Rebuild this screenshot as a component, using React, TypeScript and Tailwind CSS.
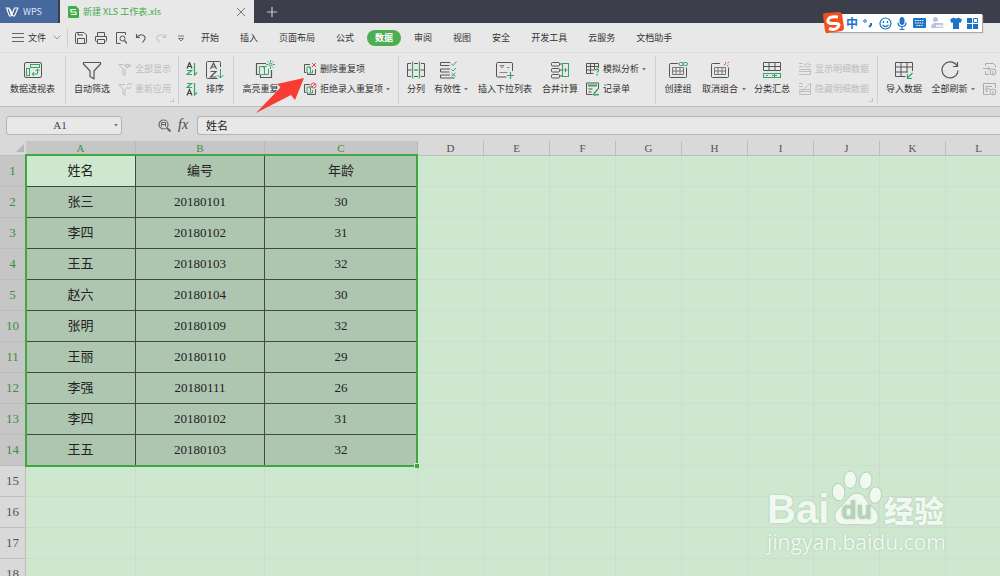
import { useState, type ReactNode } from 'react';

const GREEN = '#35a566';
const DARK = '#555555';
const RED = '#e5484d';
const FAINT = '#bdbdbd';

const menus = ['开始', '插入', '页面布局', '公式', '数据', '审阅', '视图', '安全', '开发工具', '云服务', '文档助手'];

const columns = [
  { name: 'A', className: 'w-[110px]' },
  { name: 'B', className: 'w-[129px]' },
  { name: 'C', className: 'w-[153px]' },
  { name: 'D', className: 'w-[66px]' },
  { name: 'E', className: 'w-[66px]' },
  { name: 'F', className: 'w-[66px]' },
  { name: 'G', className: 'w-[66px]' },
  { name: 'H', className: 'w-[66px]' },
  { name: 'I', className: 'w-[66px]' },
  { name: 'J', className: 'w-[66px]' },
  { name: 'K', className: 'w-[66px]' },
  { name: 'L', className: 'w-[66px]' },
];

const rows: { n: number; cells?: string[] }[] = [
  { n: 1, cells: ['姓名', '编号', '年龄'] },
  { n: 2, cells: ['张三', '20180101', '30'] },
  { n: 3, cells: ['李四', '20180102', '31'] },
  { n: 4, cells: ['王五', '20180103', '32'] },
  { n: 5, cells: ['赵六', '20180104', '30'] },
  { n: 10, cells: ['张明', '20180109', '32'] },
  { n: 11, cells: ['王丽', '20180110', '29'] },
  { n: 12, cells: ['李强', '20180111', '26'] },
  { n: 13, cells: ['李四', '20180102', '31'] },
  { n: 14, cells: ['王五', '20180103', '32'] },
  { n: 15 },
  { n: 16 },
  { n: 17 },
  { n: 18 },
];

function Svg({ box = 20, className = 'size-5', color = DARK, children }: { box?: number; className?: string; color?: string; children: ReactNode }) {
  return (
    <svg viewBox={`0 0 ${box} ${box}`} className={`shrink-0 ${className}`} fill="none" stroke={color} strokeWidth="1" aria-hidden="true">
      {children}
    </svg>
  );
}

function Caret({ className = '' }: { className?: string }) {
  return (
    <svg viewBox="0 0 4 3" className={`h-[3px] w-1 shrink-0 ${className}`} aria-hidden="true">
      <path d="M0 0h4L2 2.5z" fill="#777" />
    </svg>
  );
}

/* ---------- large ribbon icons ---------- */

const PivotIcon = () => (
  <Svg>
    <rect x="1.5" y="2.5" width="17" height="15" rx="1.5" />
    <g stroke={GREEN}>
      <rect x="7.5" y="4.5" width="9" height="3" />
      <rect x="3.5" y="8.5" width="3" height="7" />
      <path d="M14.500 9.500v4.500h-5M12.500 11l2-2 2 2M11 12l-2 2 2 2" />
    </g>
  </Svg>
);

const FunnelIcon = () => (
  <Svg>
    <path d="M1.500 2.500h17v1.500l-6.500 7v8l-4-2.500v-5.500l-6.500-7z" strokeWidth="1.2" strokeLinejoin="round" />
  </Svg>
);

const SortIcon = () => (
  <Svg>
    <path d="M15.500 7v-4.500q0-1-1-1h-12q-1 0-1 1v15q0 1 1 1h10" />
    <path d="M5.500 9l3-6 3 6M6.500 7h4M5.500 11.500h5.500l-5.500 5.500h6" strokeWidth="1.2" />
    <path d="M15.500 9v9M12.500 15l3 3 3-3" stroke={GREEN} />
  </Svg>
);

const HighlightIcon = () => (
  <Svg>
    <path d="M11 3.500h-9.500v11h3M16.500 10v7.500h-11v-3" strokeWidth="1.2" />
    <path d="M4.500 14.500v-8h7M13.500 9v5.500h-7M8 8l1.500-1v7" stroke={GREEN} />
    <circle cx="15.500" cy="4.500" r="1.500" stroke={GREEN} />
    <path d="M15.500 0v2M15.500 7v2M11 4.500h2M18 4.500h2M12.500 1.500l1 1M17.500 6.500l1 1M18.500 1.500l-1 1" stroke={GREEN} />
  </Svg>
);

const SplitIcon = () => (
  <Svg>
    <path d="M5 3.500h-3.500v13h3.500M15 3.500h3.500v13h-3.500M1.500 10h4M14.500 10h4M8 3.500h4M8 10h4M8 16.500h4" />
    <path d="M6.500 1.500v17M13.500 1.500v17" stroke={GREEN} strokeWidth="1.2" />
  </Svg>
);

const ValidIcon = () => (
  <Svg>
    <path d="M12 2.500h-9.500v3h9M12 9h-9.500v3h9M12 15h-9.500v3h14" />
    <path d="M13 3.500l2 2 3.500-4M13.500 9.500l1.500 1.500 3-3M13.500 13l4 3.500M17.500 13l-4 3.500" stroke={GREEN} />
  </Svg>
);

const DropListIcon = () => (
  <Svg>
    <path d="M17.500 11v-7q0-1.500-1-1.500h-14q-1 0-1 1v12.500q0 1 1 1h9" />
    <path d="M5 5.500h4l-2 2.500zM4.500 12.500h8M12 7.500h2.500" stroke="#888" />
    <path d="M15.500 12v7M12 15.500h7" stroke={GREEN} strokeWidth="1.200" />
  </Svg>
);

const MergeIcon = () => (
  <Svg>
    <rect x="1.500" y="2.500" width="8" height="3.500" rx="1" />
    <rect x="1.500" y="8.500" width="8" height="3.500" rx="1" />
    <rect x="1.500" y="14.500" width="8" height="3.500" rx="1" />
    <path d="M9.500 4h2.500M9.500 10h2.500M9.500 16h2.500" />
    <rect x="12.500" y="3.500" width="6" height="13" stroke={GREEN} />
    <path d="M15.500 8v4M13.500 10h4" stroke={GREEN} />
  </Svg>
);

const GroupGrid = () => (
  <>
    <path d="M10 3.500h-7.500q-1 0-1 1v12q0 1 1 1h15q1 0 1-1v-9" />
    <path d="M4.500 7.500h11v7h-11zM4.500 11h11M8 7.500v7M12 7.500v7" stroke="#777" />
  </>
);

const CreateGroupIcon = () => (
  <Svg>
    <GroupGrid />
    <rect x="11" y="2.500" width="4.500" height="3" rx="1.500" stroke={GREEN} />
    <rect x="15" y="2.500" width="4.500" height="3" rx="1.500" stroke={GREEN} />
  </Svg>
);

const UngroupIcon = () => (
  <Svg>
    <GroupGrid />
    <path d="M14 5l2-1.500M17 6l1.500-1M15 2l1 1M19 2l-1.500 1" stroke={RED} />
  </Svg>
);

const SubtotalIcon = () => (
  <Svg>
    <path d="M1.500 2.500h17v8h-17zM1.500 6.500h17M7 2.500v8M13 2.500v8" />
    <rect x="1.500" y="13.500" width="17" height="4" stroke={GREEN} />
    <path d="M4 15.500h2M10 15.500h5M12.500 13.500v4" stroke={GREEN} />
  </Svg>
);

const ImportIcon = () => (
  <Svg>
    <path d="M18.500 11v-8.500h-17v14h10M1.500 7h17M1.500 12h12M7 2.500v14M13 2.500v10" />
    <path d="M18.500 13l-5 5M13.500 14v4.500h4.500" stroke={GREEN} strokeWidth="1.200" />
  </Svg>
);

const RefreshIcon = () => (
  <Svg>
    <path d="M17 6a8 8 0 1 0 1 4.500M17.500 2v4.500h-4.500" strokeWidth="1.200" />
  </Svg>
);

/* ---------- small ribbon icons ---------- */

const ShowAllIcon = () => (
  <Svg box={14} className="size-3.5" color={FAINT}>
    <path d="M5 2.500h-4l4 4.500v5l2 1.500v-6l1-1M6 3.500q3-3 7 0q-4 3.500-7 0z" />
    <circle cx="9.500" cy="3.500" r="1" />
  </Svg>
);

const ReapplyIcon = () => (
  <Svg box={14} className="size-3.5" color={FAINT}>
    <path d="M7 2.500h-6l4 4.500v5l2 1.500v-6l1-1M9 3a2.500 2.500 0 0 1 4-.5v-1.500M13 5a2.500 2.500 0 0 1-4 .5v1.500" />
  </Svg>
);

const RepeatIcon = ({ children }: { children: ReactNode }) => (
  <Svg box={14} className="size-3.5">
    <path d="M7 2.500h-5.500v8h2M12.500 7v5.500h-8v-2" />
    <path d="M4 10v-5h4M9.500 8v3h-4M6 6l1.500-.5v5" stroke={GREEN} />
    <g stroke={RED}>{children}</g>
  </Svg>
);

const WhatIfIcon = () => (
  <Svg box={14} className="size-3.5">
    <path d="M12.500 6v-4.500h-12v10h7M.5 4.500h12M.5 8h8M4.500 1.500v10M8.500 1.500v6" />
    <path d="M9.500 8.500q0-1.500 1.500-1.500t1.500 1.500q0 1-1.500 2M11 12v1.500" stroke={GREEN} strokeWidth="1.300" />
  </Svg>
);

const RecordIcon = () => (
  <Svg box={14} className="size-3.5">
    <path d="M12.500 7v-6h-12v11.500h6M2.500 7h4M2.500 10h3" />
    <path d="M2 3.500h9" stroke={GREEN} strokeWidth="2" />
    <path d="M12 7l-4 4.500v1.500l5-.5" stroke={GREEN} strokeWidth="1.500" />
  </Svg>
);

const DetailIcon = ({ slash = false }: { slash?: boolean }) => (
  <Svg box={14} className="size-3.5" color={FAINT}>
    <path d="M1 1.500h4M1 4.500h4M1 7.500h11.500M1 9.500h11.500M1 12.500h11.500v-5" />
    {slash ? <path d="M12.500 1v6M1 11.500l11-10" /> : <path d="M6 3.500q3.500-3.500 7 0q-3.500 3.500-7 0z" />}
  </Svg>
);

const SheetInfoIcon = ({ arrow = false }: { arrow?: boolean }) => (
  <Svg box={14} className="size-3.5" color="#aaaaaa">
    {arrow ? (
      <path d="M2.500 4v-2.500h8l2 2v2M2.500 9v3.500h4M0 6.500h7M5 4.500l2 2-2 2" />
    ) : (
      <path d="M12.500 6v-4.500h-12v11h6M3 4.500h6M3 4.500v5h2M3 7h4" />
    )}
    <circle cx="10" cy="10" r="3" />
    <path d="M10 9v3" />
  </Svg>
);

function SortSmall({ desc = false }: { desc?: boolean }) {
  return (
    <svg viewBox="0 0 12 14" className="h-3.5 w-3" fill="none" strokeWidth="1.200" aria-hidden="true">
      <path d={desc ? 'M1 13.500l2.500-6L6 13.500M2 11.500h3' : 'M1 6.500l2.500-6L6 6.500M2 4.500h3'} stroke="#444" />
      <path d={desc ? 'M1 1.500h4.500L1 5.500h5' : 'M1 8.500h4.500L1 12.500h5'} stroke={GREEN} />
      <path d="M8.500 1v12l2.500-2.500" stroke={GREEN} />
    </svg>
  );
}

function Big({ icon, label, width, caret }: { icon: ReactNode; label: string; width: string; caret?: boolean }) {
  return (
    <button className={`relative flex shrink-0 flex-col items-center gap-[3px] whitespace-nowrap ${width}`}>
      {icon}
      <span className="leading-3">{label}</span>
      {caret && <Caret className="absolute right-0 bottom-1" />}
    </button>
  );
}

function Small({ icon, label, caret, disabled }: { icon: ReactNode; label: string; caret?: boolean; disabled?: boolean }) {
  return (
    <button disabled={disabled} className="flex h-3.5 items-center gap-[3px] whitespace-nowrap leading-3 disabled:text-[#bdbdbd]">
      {icon}
      {label}
      {caret && <Caret />}
    </button>
  );
}

function Group({ className, corner, children }: { className: string; corner?: boolean; children: ReactNode }) {
  return (
    <div className={`relative flex h-12 shrink-0 items-start border-r border-[#d0d0d0] pt-1 ${className}`}>
      {children}
      {corner && <span className="absolute right-1 bottom-0.5 size-1 border-r border-b border-[#c4c4c4]" />}
    </div>
  );
}

function TitleBar() {
  return (
    <header className="flex h-[23px] bg-[#3c3e4c]">
      <button className="mr-0.5 flex w-[58px] items-center gap-1 bg-[#46689c] pl-[5px] text-[9px] text-[#dfe6f1]">
        <svg viewBox="0 0 14 10" className="h-2.5 w-3.5" fill="none" stroke="#fff" strokeWidth="1.1" aria-hidden="true">
          <path d="M.5 1h3.500l2.500 7.500L9.500 1h3.500l-3.500 8H8L5 2M3 1.500L2 3l2.500 6h1.500" strokeLinejoin="round" />
        </svg>
        WPS
      </button>
      <div className="flex w-[194px] items-center bg-[#e8e8e8] px-2 text-[#3fae49]">
        <svg viewBox="0 0 11 12" className="h-3 w-[11px]" aria-hidden="true">
          <path d="M0 1q0-1 1-1h7l3 3v8q0 1-1 1h-9q-1 0-1-1z" fill="#3fae49" />
          <path d="M8 3.500H3v2.500h5v2.500H3" fill="none" stroke="#fff" strokeWidth="1.200" />
        </svg>
        <span className="ml-1 flex-1 text-[9px]">新建 XLS 工作表.xls</span>
        <button aria-label="关闭">
          <svg viewBox="0 0 10 10" className="size-2.5" stroke="#777" aria-hidden="true">
            <path d="M1 1l8 8M9 1l-8 8" />
          </svg>
        </button>
      </div>
      <button className="ml-[13px]" aria-label="新建">
        <svg viewBox="0 0 10 10" className="size-2.5" stroke="#c8c8cf" strokeWidth="1.200" aria-hidden="true">
          <path d="M5 0v10M0 5h10" />
        </svg>
      </button>
    </header>
  );
}

function MenuBar({ active, onSelect }: { active: string; onSelect: (m: string) => void }) {
  return (
    <nav className="flex h-[30px] items-center border-b border-[#dcdcdc] text-[#333]">
      <button className="flex w-[68px] shrink-0 items-center border-r border-[#cfcfcf] pl-3 leading-[18px]">
        <svg viewBox="0 0 12 9" className="mr-1 h-[9px] w-3" stroke="#666" aria-hidden="true">
          <path d="M0 .5h12M0 4.500h12M0 8.500h12" />
        </svg>
        文件
        <svg viewBox="0 0 8 5" className="ml-[7px] h-[5px] w-2" fill="none" stroke="#999" aria-hidden="true">
          <path d="M.5.5L4 4 7.500.5" />
        </svg>
      </button>
      <div className="flex w-[133px] shrink-0 items-center gap-2 pl-[7px]">
        <button aria-label="保存">
          <Svg box={12} className="size-3">
            <path d="M.5 1.500q0-1 1-1h7.500l2.500 2.500v7.500q0 1-1 1h-9q-1 0-1-1zM2.500 11.500v-5h7v5M3 .5v2.500h5" />
          </Svg>
        </button>
        <button aria-label="打印">
          <Svg box={12} className="size-3">
            <path d="M2.500 4v-3.500h7v3.500M2.500 9.500h-1q-1 0-1-1v-4h11v4q0 1-1 1h-1M2.500 7.500h7v4h-7z" />
          </Svg>
        </button>
        <button aria-label="打印预览">
          <Svg box={12} className="size-3">
            <path d="M10.500 3v-2.500h-9v11h4" />
            <circle cx="7.500" cy="6.500" r="2.500" />
            <path d="M9.500 8.500l2.500 3" strokeWidth="1.300" />
          </Svg>
        </button>
        <button aria-label="撤销">
          <Svg box={12} className="size-3">
            <path d="M1.500 2v3.500h3.500M1.500 5.500q3-3.500 6-2.500t2.500 4l-2.500 3.500" strokeWidth="1.100" />
          </Svg>
        </button>
        <button aria-label="恢复">
          <Svg box={12} className="size-3" color="#c4c4c4">
            <path d="M10.500 2v3.500h-3.500M10.500 5.500q-3-3.500-6-2.500t-2.500 4l2.500 3.500" strokeWidth="1.100" />
          </Svg>
        </button>
        <button aria-label="更多">
          <Svg box={12} className="size-3" color="#777">
            <path d="M3 4h6M3.500 6.500h5L6 9z" />
          </Svg>
        </button>
      </div>
      <div className="flex items-center gap-[21px]">
        {menus.map((m) => (
          <button
            key={m}
            onClick={() => onSelect(m)}
            className={
              m === active
                ? '-mx-2 h-4 shrink-0 rounded-full bg-[#4cae50] px-2 font-bold whitespace-nowrap text-white'
                : 'shrink-0 whitespace-nowrap'
            }
          >
            {m}
          </button>
        ))}
      </div>
    </nav>
  );
}

function Ribbon() {
  return (
    <section className="relative z-10 flex h-[53px] pt-[3px] text-[#333]">
      <div className="flex w-full overflow-hidden">
        <Group className="w-[66px] justify-center">
          <Big icon={<PivotIcon />} label="数据透视表" width="w-[50px]" />
        </Group>
        <Group className="w-[113px] gap-1.5 pl-1.5" corner>
          <Big icon={<FunnelIcon />} label="自动筛选" width="w-10" />
          <div className="flex flex-col gap-1.5 pt-0.5">
            <Small icon={<ShowAllIcon />} label="全部显示" disabled />
            <Small icon={<ReapplyIcon />} label="重新应用" disabled />
          </div>
        </Group>
        <Group className="w-[55px] gap-[7px] pl-[7px]">
          <div className="flex flex-col gap-1.5 pt-0.5">
            <button aria-label="升序"><SortSmall /></button>
            <button aria-label="降序"><SortSmall desc /></button>
          </div>
          <Big icon={<SortIcon />} label="排序" width="w-5" />
        </Group>
        <Group className="w-[165px] gap-[14px] pl-[7px]">
          <Big icon={<HighlightIcon />} label="高亮重复项" width="w-12" />
          <div className="flex flex-col gap-1.5 pt-0.5">
            <Small icon={<RepeatIcon><path d="M9 1l4 4M13 1l-4 4" /></RepeatIcon>} label="删除重复项" />
            <Small icon={<RepeatIcon><circle cx="10.500" cy="3.500" r="2.500" /><path d="M9 5l3-3" /></RepeatIcon>} label="拒绝录入重复项" caret />
          </div>
        </Group>
        <Group className="w-[257px] pl-1.5">
          <Big icon={<SplitIcon />} label="分列" width="w-[22px]" />
          <Big icon={<ValidIcon />} label="有效性" width="w-[41px]" caret />
          <Big icon={<DropListIcon />} label="插入下拉列表" width="w-[74px]" />
          <Big icon={<MergeIcon />} label="合并计算" width="w-9" />
          <div className="flex flex-col gap-1.5 pt-0.5 pl-2">
            <Small icon={<WhatIfIcon />} label="模拟分析" caret />
            <Small icon={<RecordIcon />} label="记录单" />
          </div>
        </Group>
        <Group className="w-[222px] pl-1.5" corner>
          <Big icon={<CreateGroupIcon />} label="创建组" width="w-8" />
          <Big icon={<UngroupIcon />} label="取消组合" width="w-[52px]" caret />
          <Big icon={<SubtotalIcon />} label="分类汇总" width="w-[52px]" />
          <div className="flex flex-col gap-1.5 pt-0.5">
            <Small icon={<DetailIcon />} label="显示明细数据" disabled />
            <Small icon={<DetailIcon slash />} label="隐藏明细数据" disabled />
          </div>
        </Group>
        <div className="flex h-12 shrink-0 items-start pt-1 pl-1.5">
          <Big icon={<ImportIcon />} label="导入数据" width="w-10" />
          <Big icon={<RefreshIcon />} label="全部刷新" width="w-[51px]" caret />
          <div className="flex flex-col gap-1.5 pt-0.5 pl-2">
            <button aria-label="连接"><SheetInfoIcon arrow /></button>
            <button aria-label="属性"><SheetInfoIcon /></button>
          </div>
        </div>
      </div>
      <svg viewBox="0 0 50 36" className="pointer-events-none absolute top-[25px] left-[255px] h-9 w-[50px]" aria-hidden="true">
        <path d="M1 35L26 9l-4-3L49 0 40 22l-4-5z" fill="#fa3b34" />
      </svg>
    </section>
  );
}

function FormulaBar() {
  const [formula, setFormula] = useState('姓名');
  return (
    <div className="flex h-[35px] items-center border-t border-[#bfbfbf] bg-[#d9d9d9] pt-0.5 pl-1.5">
      <div className="relative h-[19px] w-[116px] shrink-0">
        <input
          aria-label="名称框"
          defaultValue="A1"
          className="h-full w-full rounded-[3px] border border-[#b4b4b4] bg-[#e8e8e8] pr-2 text-center font-['Liberation_Serif',serif] text-[11px] text-[#444]"
        />
        <Caret className="absolute top-2 right-1" />
      </div>
      <svg viewBox="0 0 13 13" className="ml-9 size-[13px] shrink-0" fill="none" stroke="#666" strokeWidth="1.200" aria-hidden="true">
        <circle cx="5.500" cy="5.500" r="4.500" />
        <path d="M9 9l3.500 3.500" strokeWidth="2" />
        <path d="M3.500 7.500v-4h4v4M3.500 5.500h4" strokeWidth="1" />
      </svg>
      <span className="w-[26px] shrink-0 pl-[7px] font-['Liberation_Serif',serif] text-[14px] leading-4 text-[#444] italic">fx</span>
      <input
        aria-label="编辑栏"
        value={formula}
        onChange={(e) => setFormula(e.target.value)}
        className="h-[19px] min-w-0 flex-1 rounded-l-[3px] border border-r-0 border-[#b4b4b4] bg-[#e8e8e8] pl-2 text-[11px] text-[#222]"
      />
    </div>
  );
}

function cellClass(selected: boolean, r: number, c: number) {
  if (!selected) return 'border-r border-b border-[#d2d8d2] p-0';
  if (r === 0 && c === 0) return 'border-r border-b border-[#3e4a40] bg-[#cde8cf] p-0';
  return 'border-r border-b border-[#3e4a40] bg-[#aec6b0] p-0';
}

function Sheet() {
  return (
    <main className="relative min-h-0 flex-1 overflow-hidden bg-[#cde8cf]">
      <table className="w-[1012px] table-fixed border-separate border-spacing-0 text-center font-['Liberation_Serif','Noto_Sans_CJK_SC',serif] text-[13px] leading-4 text-[#222]">
        <thead>
          <tr className="h-[15px] text-[11px] leading-3 text-[#555]">
            <th className="w-[26px] border-b border-[#bcbcbc] bg-[#d9d9d9] p-0">
              <svg viewBox="0 0 8 8" className="ml-4 size-2" aria-hidden="true">
                <path d="M8 0v8H0z" fill="#b5b5b5" />
              </svg>
            </th>
            {columns.map((col, i) => (
              <th
                key={col.name}
                scope="col"
                className={`border-r border-b border-[#bcbcbc] p-0 font-normal ${i < 3 ? 'bg-[#c6c6c6] text-[#3b8f40]' : 'bg-[#d9d9d9]'} ${col.className}`}
              >
                {col.name}
              </th>
            ))}
          </tr>
        </thead>
        <tbody>
          {rows.map((row, r) => (
            <tr key={row.n} className="h-[31px]">
              <th
                scope="row"
                className={`border-r border-b border-[#bcbcbc] p-0 font-normal ${row.cells ? 'bg-[#c6c6c6] text-[#3b8f40]' : 'bg-[#d9d9d9] text-[#555]'}`}
              >
                {row.n}
              </th>
              {columns.map((col, c) => (
                <td key={col.name} className={cellClass(!!row.cells && c < 3, r, c)}>
                  {row.cells?.[c]}
                </td>
              ))}
            </tr>
          ))}
        </tbody>
      </table>
      <div className="pointer-events-none absolute top-[13px] left-[25px] h-[313px] w-[393px] border-2 border-[#3fa642]">
        <span className="absolute -right-[3px] -bottom-[3px] size-[5px] border-t border-l border-[#cde8cf] bg-[#3fa642]" />
      </div>
      <Watermark />
    </main>
  );
}

function Watermark() {
  return (
    <div className="pointer-events-none absolute right-14 bottom-[22px] w-[177px] text-[#f1f8f1] [text-shadow:0_0_2px_#9fbfa2]">
      <div className="flex h-[60px] items-end justify-between font-bold">
        <span className="font-['Liberation_Sans',sans-serif] text-[40px] leading-[42px]">Bai</span>
        <span className="relative mb-1">
          <svg viewBox="0 0 52 60" className="h-[58px] w-[52px]" fill="#f1f8f1" stroke="#b3d0b5" strokeWidth="1" aria-hidden="true">
            <ellipse cx="7" cy="25" rx="6.500" ry="9" transform="rotate(-8 7 25)" />
            <ellipse cx="19" cy="12" rx="6.500" ry="9" />
            <ellipse cx="35" cy="13" rx="6.500" ry="9" transform="rotate(10 35 13)" />
            <ellipse cx="45" cy="28" rx="6.500" ry="8.500" transform="rotate(8 45 28)" />
            <path d="M26 26c7 0 9 7 13 12 4 4 9 7 9 13 0 7-6 8-11 8-7 0-15-1-22 0-7 0-12-3-12-9 0-7 6-9 10-14 4-4 6-10 13-10z" />
          </svg>
          <span className="absolute inset-x-0 bottom-0.5 text-center font-['Liberation_Sans',sans-serif] text-[25px] leading-7 text-[#b5d3b8]">du</span>
        </span>
        <span className="text-[30px] leading-[42px] font-black">经验</span>
      </div>
      <p className="font-['Open_Sans',sans-serif] text-[21px] leading-6">jingyan.baidu.com</p>
    </div>
  );
}

function ImeBar() {
  return (
    <div className="absolute top-3.5 right-[18px] z-20 flex h-[18px] w-[152px] items-center justify-between bg-white pr-1 pl-3 text-[#1c74c6] shadow-[1px_1px_1px_#aaa]">
      <svg viewBox="0 0 22 22" className="absolute -top-0.5 -left-2 size-[22px]" aria-hidden="true">
        <path d="M1 3q0-2 2-2l14-1q2 0 3 2l2 14q0 2-2 3L6 21q-2 1-3-2z" fill="#f0501e" />
        <path d="M16 5Q7 4 6 8t6 3.500 4 3.500-9 1.500" fill="none" stroke="#fff" strokeWidth="3" />
      </svg>
      <span className="ml-1 text-xs leading-4 font-bold">中</span>
      <svg viewBox="0 0 10 10" className="size-2.5" fill="none" stroke="currentColor" aria-hidden="true">
        <circle cx="2" cy="3" r="1.300" />
        <path d="M8 5v2l-2 2" strokeWidth="2" />
      </svg>
      <svg viewBox="0 0 13 13" className="size-[13px]" fill="none" stroke="currentColor" strokeWidth="1.200" aria-hidden="true">
        <circle cx="6.500" cy="6.500" r="5.500" />
        <path d="M4.500 4v2M8.500 4v2M3.500 8q3 3 6 0" />
      </svg>
      <svg viewBox="0 0 10 13" className="h-[13px] w-2.5" fill="none" stroke="currentColor" aria-hidden="true">
        <rect x="3" y=".5" width="4" height="7" rx="2" fill="currentColor" />
        <path d="M1 5.500q0 4 4 4t4-4M5 9.500v3M2.500 12.500h5" strokeWidth="1.200" />
      </svg>
      <svg viewBox="0 0 13 10" className="h-2.5 w-[13px]" aria-hidden="true">
        <rect width="13" height="10" rx="1" fill="currentColor" />
        <path d="M2 2.500h9M2 5h9M3.500 7.500h6" stroke="#fff" strokeDasharray="1.500 .8" />
      </svg>
      <svg viewBox="0 0 13 12" className="h-3 w-[13px]" fill="#b9c4d6" aria-hidden="true">
        <circle cx="4.500" cy="2.500" r="2.500" />
        <path d="M0 11q0-5 4.500-5h7.500v5z" />
        <path d="M5 7.500h7v3H5zM7.500 8v2M10 8v2" fill="#fff" stroke="#b9c4d6" strokeWidth=".7" />
      </svg>
      <svg viewBox="0 0 12 12" className="size-3" fill="currentColor" aria-hidden="true">
        <path d="M3.500.5q2.500 2 5 0L12 2.500 10.500 6 9 5.500V12H3V5.500L1.500 6 0 2.500z" />
      </svg>
      <svg viewBox="0 0 11 11" className="size-[11px]" fill="currentColor" aria-hidden="true">
        <path d="M0 0h5v5H0zM0 6h5v5H0zM6 6h5v5H6z" />
        <path d="M6.500.5h4v4h-4z" fill="none" stroke="currentColor" />
      </svg>
    </div>
  );
}

export default function App() {
  const [active, setActive] = useState('数据');

  return (
    <div className="relative flex h-screen flex-col overflow-hidden bg-[#e8e8e8] font-['Noto_Sans_CJK_SC',sans-serif] text-[9px]">
      <TitleBar />
      <MenuBar active={active} onSelect={setActive} />
      <Ribbon />
      <FormulaBar />
      <Sheet />
      <ImeBar />
    </div>
  );
}
